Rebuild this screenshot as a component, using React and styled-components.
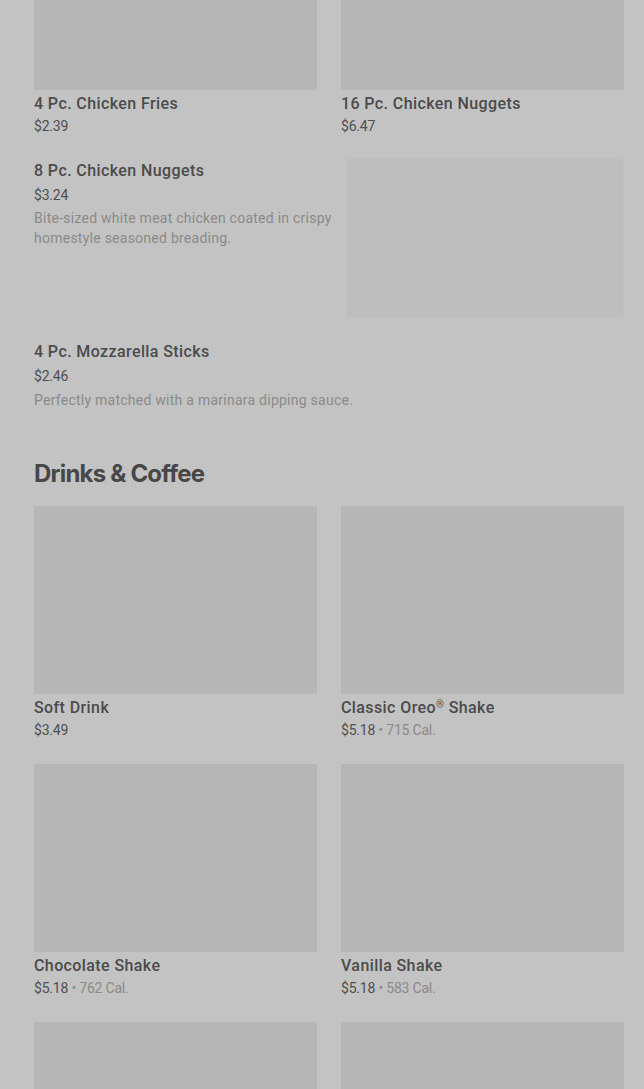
import React from 'react'
import styled, { createGlobalStyle } from 'styled-components'

const GlobalStyle = createGlobalStyle`
  html, body {
    margin: 0;
    padding: 0;
    background: #c3c3c3;
    overflow: hidden;
  }
  body {
    font-family: Roboto, "Liberation Sans", sans-serif;
  }
`

const Page = styled.div`
  width: 644px;
  height: 1089px;
  overflow: hidden;
  background: #c3c3c3;
`

// page is scrolled, first row of images sits partly above the fold
const Scroller = styled.div`
  margin-top: -98px;
  padding: 0 20px 0 34px;
`

const Grid = styled.div`
  display: grid;
  grid-template-columns: 283px 283px;
  column-gap: 24px;
  row-gap: 24px;
`

const Card = styled.div`
  display: flex;
  flex-direction: column;
`

const Photo = styled.div`
  height: 188px;
  background: #b6b6b6;
`

const Title = styled.div`
  margin-top: ${(p) => p.top || 0}px;
  font-size: 16px;
  line-height: 24px;
  font-weight: 500;
  letter-spacing: 0.4px;
  color: #4b4b4b;
`

const Reg = styled.sup`
  font-size: 10px;
  line-height: 0;
  vertical-align: 5px;
`

const Price = styled.div`
  margin-top: ${(p) => p.top || 0}px;
  font-size: 14px;
  line-height: 20px;
  color: #4f4f4f;
  letter-spacing: -0.2px;
`

const Cal = styled.span`
  color: #8a8a8a;
`

const Desc = styled.div`
  margin-top: ${(p) => p.top || 3}px;
  font-size: 14px;
  line-height: 20px;
  color: #8a8a8a;
  letter-spacing: 0.25px;
`

const ListItem = styled.div`
  display: flex;
  justify-content: space-between;
  margin-top: ${(p) => p.top}px;
`

const ListText = styled.div`
  width: ${(p) => (p.wide ? 'auto' : '304px')};
`

const ListPhoto = styled.div`
  width: 278px;
  height: 160px;
  background: #bebebe;
  border: 1px solid #c1c1c1;
  box-sizing: border-box;
`

const Heading = styled.h2`
  margin: 48px 0 16px;
  font-family: Inter, "Noto Sans", sans-serif;
  font-size: 24px;
  line-height: 32px;
  font-weight: 700;
  letter-spacing: -0.8px;
  color: #474747;
`

const topItems = [
  { name: '4 Pc. Chicken Fries', price: '$2.39' },
  { name: '16 Pc. Chicken Nuggets', price: '$6.47' },
]

const drinks = [
  { name: 'Soft Drink', price: '$3.49' },
  { name: <>Classic Oreo<Reg>®</Reg> Shake</>, price: '$5.18', cal: '715 Cal.' },
  { name: 'Chocolate Shake', price: '$5.18', cal: '762 Cal.' },
  { name: 'Vanilla Shake', price: '$5.18', cal: '583 Cal.' },
  { name: '', price: '' },
  { name: '', price: '' },
]

const GridCard = ({ item }) => (
  <Card>
    <Photo />
    <Title top={2}>{item.name}</Title>
    <Price>
      {item.price}
      {item.cal && <Cal> • {item.cal}</Cal>}
    </Price>
  </Card>
)

export default function App() {
  return (
    <Page>
      <GlobalStyle />
      <Scroller>
        <Grid>
          {topItems.map((item, i) => <GridCard key={i} item={item} />)}
        </Grid>

        <ListItem top={22}>
          <ListText>
            <Title top={1}>8 Pc. Chicken Nuggets</Title>
            <Price top={2}>$3.24</Price>
            <Desc>Bite-sized white meat chicken coated in crispy homestyle seasoned breading.</Desc>
          </ListText>
          <ListPhoto />
        </ListItem>

        <ListItem top={21}>
          <ListText wide>
            <Title top={1}>4 Pc. Mozzarella Sticks</Title>
            <Price top={2}>$2.46</Price>
            <Desc top={4}>Perfectly matched with a marinara dipping sauce.</Desc>
          </ListText>
        </ListItem>

        <Heading>Drinks &amp; Coffee</Heading>

        <Grid>
          {drinks.map((item, i) => <GridCard key={i} item={item} />)}
        </Grid>
      </Scroller>
    </Page>
  )
}
